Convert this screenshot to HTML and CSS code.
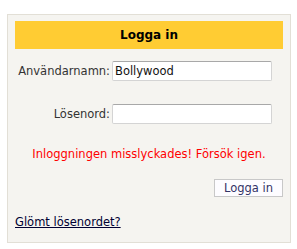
FILE: index.html
```html
<!DOCTYPE html>
<html lang="sv">
<head>
    <meta charset="UTF-8">
    <meta name="viewport" content="width=device-width, initial-scale=1.0">
    <title>Logga in</title>
    <link rel="stylesheet" href="styles.css">
</head>
<body>
    <div class="panel">
        <h1 class="rubrik">Logga in</h1>

        <form id="inloggning">
            <div class="rad">
                <label for="anvandare">Användarnamn:</label>
                <input type="text" id="anvandare" name="anvandare" value="Bollywood">
            </div>
            <div class="rad">
                <label for="losen">Lösenord:</label>
                <input type="password" id="losen" name="losen">
            </div>

            <p class="fel">Inloggningen misslyckades! Försök igen.</p>

            <div class="knapprad">
                <button type="submit">Logga in</button>
            </div>
        </form>

        <a class="glomt" href="#">Glömt lösenordet?</a>
    </div>
</body>
</html>
```

FILE: styles.css
```css
body {
    margin: 0;
    background-color: #ffffff;
    font-family: "DejaVu Sans", Verdana, sans-serif;
    font-size: 11.5px;
    color: #333333;
}

.panel {
    margin: 14px 0 0 7px;
    width: 268px;
    height: 221px;
    padding: 6px 7px 0 7px;
    background-color: #f5f4f0;
    border: 1px solid #e2dfd6;
}

.rubrik {
    margin: 0;
    height: 28px;
    line-height: 28px;
    background-color: #ffcc33;
    color: #000000;
    font-size: 12px;
    font-weight: bold;
    text-align: center;
}

#inloggning {
    margin-top: 12px;
}

.rad {
    display: flex;
    align-items: center;
    margin-bottom: 23px;
}

.rad label {
    width: 95px;
    margin-right: 2px;
    text-align: right;
}

.rad input {
    width: 154px;
    height: 14px;
    padding: 2px 2px;
    border: 1px solid #d4d4d4;
    border-top-color: #a8a8a8;
    border-radius: 2px;
    background-color: #ffffff;
    font-family: inherit;
    font-size: 11.5px;
    color: #111111;
    outline: none;
}

.fel {
    margin: 0;
    color: #ff0000;
    text-align: center;
}

.knapprad {
    display: flex;
    justify-content: flex-end;
    margin-top: 18px;
}

button {
    width: 69px;
    height: 18px;
    padding: 0;
    background-color: #fdfcff;
    border: 1px solid #c8c8c8;
    color: #333366;
    font-family: inherit;
    font-size: 11.5px;
}

.glomt {
    display: inline-block;
    margin-top: 18px;
    color: #000033;
    text-decoration: underline;
}
```
